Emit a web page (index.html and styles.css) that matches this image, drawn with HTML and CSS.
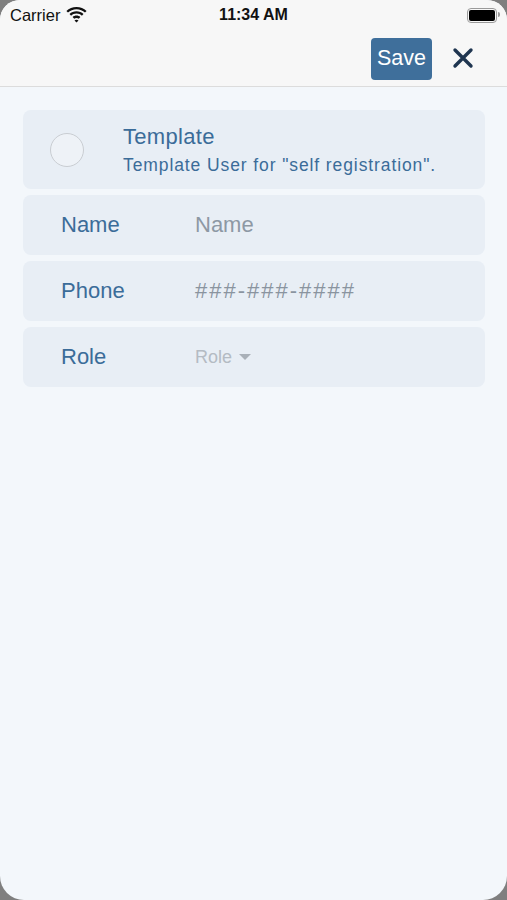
FILE: index.html
```html
<!DOCTYPE html>
<html lang="en">
<head>
    <meta charset="UTF-8">
    <meta name="viewport" content="width=device-width, initial-scale=1.0">
    <title>New User</title>
    <link rel="stylesheet" href="styles.css">
</head>
<body>
    <div class="screen">

        <!-- Status bar -->
        <div class="status-bar">
            <div class="status-left">
                <span class="carrier">Carrier</span>
                <svg class="wifi" width="21" height="16" viewBox="0 0 21 16">
                    <path d="M10.5 2.2c3.3 0 6.3 1.3 8.5 3.4l1.6-1.7C17.9 1.4 14.4 0 10.5 0S3.1 1.4.4 3.9L2 5.6c2.2-2.1 5.2-3.4 8.5-3.4z" fill="#111"/>
                    <path d="M10.5 6.6c2.1 0 4 .8 5.4 2.1l1.6-1.7c-1.8-1.7-4.3-2.7-7-2.7s-5.2 1-7 2.7l1.6 1.7c1.4-1.3 3.3-2.1 5.4-2.1z" fill="#111"/>
                    <path d="M10.5 10.9c.9 0 1.7.3 2.3.9l1.6-1.7c-1-1-2.4-1.5-3.9-1.5s-2.9.5-3.9 1.5l1.6 1.7c.6-.6 1.4-.9 2.3-.9z" fill="#111"/>
                    <path d="M10.5 15.6l2-2.1c-.5-.5-1.2-.8-2-.8s-1.5.3-2 .8z" fill="#111"/>
                </svg>
            </div>
            <span class="clock">11:34 AM</span>
            <div class="battery">
                <div class="battery-fill"></div>
            </div>
        </div>

        <!-- Nav bar -->
        <div class="nav-bar">
            <button class="save-btn">Save</button>
            <button class="close-btn" aria-label="Close">
                <svg width="22" height="22" viewBox="0 0 22 22">
                    <path d="M3 3L19 19M19 3L3 19" stroke="#1f3550" stroke-width="3.4" stroke-linecap="round"/>
                </svg>
            </button>
        </div>

        <!-- Form -->
        <div class="content">
            <div class="card template-card">
                <div class="radio"></div>
                <div class="template-text">
                    <div class="template-title">Template</div>
                    <div class="template-sub">Template User for "self registration".</div>
                </div>
            </div>

            <div class="card field-row">
                <span class="field-label">Name</span>
                <span class="field-input">Name</span>
            </div>

            <div class="card field-row">
                <span class="field-label">Phone</span>
                <span class="field-input phone">###-###-####</span>
            </div>

            <div class="card field-row">
                <span class="field-label">Role</span>
                <span class="field-select">Role <span class="caret"></span></span>
            </div>
        </div>

    </div>
</body>
</html>
```

FILE: styles.css
```css
body {
    margin: 0;
    background-color: #7f7f7f;
    font-family: "Liberation Sans", Arial, sans-serif;
}

.screen {
    width: 507px;
    height: 900px;
    background-color: #f3f7fb;
    border-radius: 20px 20px 24px 24px;
    overflow: hidden;
    display: flex;
    flex-direction: column;
}

/* Status bar */
.status-bar {
    height: 30px;
    background-color: #f7f7f7;
    display: flex;
    align-items: center;
    justify-content: space-between;
    padding: 0 10px;
    position: relative;
}

.status-left {
    display: flex;
    align-items: center;
    gap: 6px;
}

.carrier {
    font-size: 16.5px;
    color: #111;
}

.clock {
    position: absolute;
    left: 0;
    right: 0;
    text-align: center;
    font-size: 16px;
    font-weight: bold;
    color: #111;
    pointer-events: none;
}

.battery {
    width: 26px;
    height: 11px;
    border: 1.5px solid #9a9a9a;
    border-radius: 4px;
    padding: 1px;
    position: relative;
}

.battery::after {
    content: "";
    position: absolute;
    right: -4px;
    top: 3px;
    width: 2px;
    height: 5px;
    border-radius: 0 2px 2px 0;
    background-color: #9a9a9a;
}

.battery-fill {
    width: 100%;
    height: 100%;
    background-color: #000;
    border-radius: 2px;
}

/* Nav bar */
.nav-bar {
    height: 56px;
    background-color: #f7f7f7;
    border-bottom: 1px solid #dcdcdc;
    display: flex;
    align-items: center;
    justify-content: flex-end;
    padding-right: 33px;
    gap: 20px;
}

.save-btn {
    background-color: #3f6f9b;
    color: white;
    font-family: inherit;
    font-size: 21.5px;
    border: none;
    border-radius: 4px;
    height: 42px;
    width: 61px;
    padding: 0;
    margin-top: 1px;
}

.close-btn {
    background: none;
    border: none;
    padding: 0;
    width: 22px;
    height: 22px;
}

.close-btn svg {
    display: block;
}

/* Form */
.content {
    padding: 23px 22px 0 23px;
    display: flex;
    flex-direction: column;
    gap: 6px;
}

.card {
    background-color: #e8eef5;
    border-radius: 8px;
    display: flex;
    align-items: center;
}

.template-card {
    height: 79px;
    padding-left: 27px;
    gap: 39px;
}

.radio {
    width: 32px;
    height: 32px;
    border: 1.5px solid #c9cdd2;
    border-radius: 50%;
    background-color: #eef2f7;
    flex-shrink: 0;
}

.template-title {
    font-size: 22px;
    color: #3b6c99;
    letter-spacing: 0.3px;
    margin-bottom: 5px;
}

.template-sub {
    font-size: 17.5px;
    letter-spacing: 0.9px;
    color: #3b6c99;
}

.field-row {
    height: 60px;
    padding-left: 38px;
}

.field-label {
    width: 134px;
    font-size: 22px;
    color: #3b6c99;
}

.field-input {
    font-size: 22px;
    color: #8d98a4;
}

.field-input.phone {
    letter-spacing: 2px;
    color: #8a949f;
}

.field-select {
    font-size: 18px;
    color: #b4bbc3;
    display: flex;
    align-items: center;
    gap: 7px;
}

.caret {
    width: 0;
    height: 0;
    border-left: 6px solid transparent;
    border-right: 6px solid transparent;
    border-top: 6px solid #a9b0b8;
}
```
